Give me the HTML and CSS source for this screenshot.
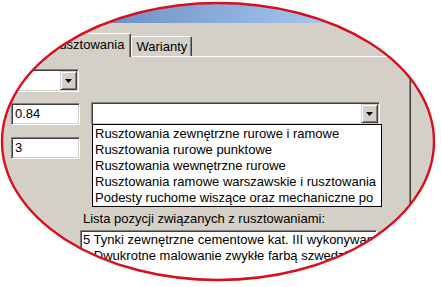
FILE: index.html
```html
<!DOCTYPE html>
<html lang="pl">
<head>
<meta charset="utf-8">
<title>Rusztowania</title>
<link rel="stylesheet" href="styles.css">
</head>
<body>
<div class="stage">
  <div class="window">
    <div class="titlebar"></div>
    <div class="tabs">
      <div class="tab active">Rusztowania</div>
      <div class="tab">Warianty</div>
    </div>
    <div class="panel">
      <div class="row row-top">
        <div class="combo combo-small">
          <div class="field"></div>
          <div class="btn"><svg width="7" height="4" viewBox="0 0 7 4"><polygon points="0,0 7,0 3.5,4" fill="#000"/></svg></div>
        </div>
      </div>
      <div class="row row-mid">
        <div class="edit">0.84</div>
        <div class="combo combo-big">
          <div class="field"></div>
          <div class="btn"><svg width="7" height="4" viewBox="0 0 7 4"><polygon points="0,0 7,0 3.5,4" fill="#000"/></svg></div>
          <ul class="droplist">
            <li>Rusztowania zewnętrzne rurowe i ramowe</li>
            <li>Rusztowania rurowe punktowe</li>
            <li>Rusztowania wewnętrzne rurowe</li>
            <li>Rusztowania ramowe warszawskie i rusztowania</li>
            <li>Podesty ruchome wiszące oraz mechaniczne po</li>
          </ul>
        </div>
      </div>
      <div class="row row-low">
        <div class="edit">3</div>
      </div>
      <div class="label">Lista pozycji związanych z rusztowaniami:</div>
      <ul class="listbox">
        <li>5 Tynki zewnętrzne cementowe kat. III wykonywan</li>
        <li>6 Dwukrotne malowanie zwykłe farbą szwedzką</li>
      </ul>
    </div>
  </div>
  <svg class="ring" width="441" height="287" viewBox="0 0 441 287">
    <ellipse cx="218" cy="141.5" rx="216" ry="138.5" fill="none" stroke="#d8101e" stroke-width="2.4"/>
  </svg>
</div>
</body>
</html>
```

FILE: styles.css
```css
* { box-sizing: border-box; }
html, body { margin: 0; padding: 0; background: #fff; }
body {
  font-family: "Liberation Sans", Arial, sans-serif;
  font-size: 13px;
  color: #000;
}
.stage {
  position: relative;
  width: 441px;
  height: 287px;
  overflow: hidden;
  background: #fff;
}
.window {
  width: 441px;
  height: 287px;
  background: #d4d0c8;
  clip-path: ellipse(216px 138.5px at 218px 141.5px);
  display: flex;
  flex-direction: column;
}
.ring {
  position: absolute;
  left: 0;
  top: 0;
}
.titlebar {
  height: 23px;
  flex: none;
  background: linear-gradient(90deg, #5372a9 0px, #6f90c6 110px, #a6c8ef 330px, #a6caf0 100%);
}
.tabs {
  display: flex;
  align-items: flex-end;
  height: 33px;
  padding-left: 42px;
  flex: none;
  position: relative;
  z-index: 2;
}
.tab {
  height: 20px;
  line-height: 19px;
  padding: 0 4px 0 4px;
  border-top: 1px solid #fff;
  border-left: 1px solid #fff;
  border-right: 1px solid #404040;
  box-shadow: inset -1px 0 0 #808080;
  border-radius: 2px 2px 0 0;
  background: #d4d0c8;
  white-space: nowrap;
}
.tab.active {
  height: 24px;
  line-height: 22px;
  padding: 0 6px 0 7px;
  margin-bottom: -1px;
}
.panel {
  width: 411px;
  flex: 1;
  border-top: 1px solid #fff;
  border-right: 1px solid #404040;
  box-shadow: inset -1px 0 0 #808080;
  display: flex;
  flex-direction: column;
}
.row {
  display: flex;
  align-items: flex-start;
}
.row-top { margin-top: 12px; }
.row-mid { margin-top: 10px; }
.row-low { margin-top: 12px; }

.edit {
  width: 69px;
  height: 22px;
  margin-left: 11px;
  margin-top: 1px;
  background: #fff;
  border-top: 1px solid #808080;
  border-left: 1px solid #808080;
  border-right: 1px solid #fff;
  border-bottom: 1px solid #fff;
  box-shadow: inset 1px 1px 0 #404040, inset -1px -1px 0 #d4d0c8;
  padding: 0 3px;
  line-height: 20px;
}
.row-low .edit { margin-top: 0; }

.combo {
  position: relative;
  display: flex;
  height: 23px;
  background: #fff;
  border-top: 1px solid #808080;
  border-left: 1px solid #808080;
  border-right: 1px solid #fff;
  border-bottom: 1px solid #fff;
  box-shadow: inset 1px 1px 0 #404040, inset -1px -1px 0 #d4d0c8;
  padding: 1px;
}
.combo-small { width: 79px; }
.combo-big { width: 289px; margin-left: 11px; }
.combo .field { flex: 1; }
.combo .btn {
  width: 17px;
  flex: none;
  background: #d4d0c8;
  border-top: 1px solid #d4d0c8;
  border-left: 1px solid #d4d0c8;
  border-right: 1px solid #404040;
  border-bottom: 1px solid #404040;
  box-shadow: inset 1px 1px 0 #fff, inset -1px -1px 0 #808080;
  display: flex;
  align-items: center;
  justify-content: center;
}
.combo .btn svg { display: block; }

.droplist {
  position: absolute;
  top: 100%;
  left: 0;
  width: 290px;
  height: 83px;
  margin: 0;
  padding: 1px 0 0 2px;
  list-style: none;
  background: #fff;
  border: 1px solid #000;
  overflow: hidden;
  z-index: 3;
}
.droplist li {
  height: 16px;
  line-height: 16px;
  white-space: nowrap;
}

.label {
  margin-top: 52px;
  margin-left: 83px;
  line-height: 15px;
  white-space: nowrap;
}
.listbox {
  margin: 4px 0 0 80px;
  width: 297px;
  height: 70px;
  padding: 1px 0 0 1px;
  list-style: none;
  background: #fff;
  border-top: 1px solid #808080;
  border-left: 1px solid #808080;
  border-right: 1px solid #fff;
  box-shadow: inset 1px 1px 0 #404040;
  overflow: hidden;
}
.listbox li {
  height: 16px;
  line-height: 16px;
  white-space: nowrap;
  padding-left: 1px;
}
```
